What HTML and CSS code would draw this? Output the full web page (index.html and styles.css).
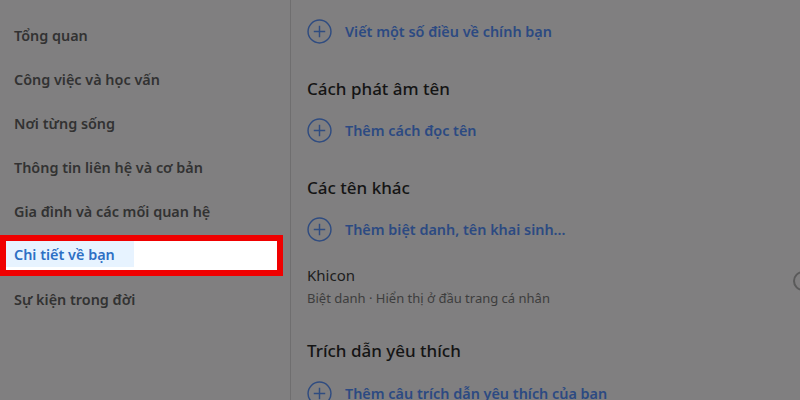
FILE: index.html
```html
<!DOCTYPE html>
<html lang="vi">
<head>
    <meta charset="UTF-8">
    <meta name="viewport" content="width=device-width, initial-scale=1.0">
    <title>Giới thiệu</title>
    <link rel="stylesheet" href="styles.css">
</head>
<body>
    <div class="about">
        <!-- menu bên trái -->
        <ul class="about-nav">
            <li class="nav-item">Tổng quan</li>
            <li class="nav-item">Công việc và học vấn</li>
            <li class="nav-item">Nơi từng sống</li>
            <li class="nav-item">Thông tin liên hệ và cơ bản</li>
            <li class="nav-item">Gia đình và các mối quan hệ</li>
            <li class="nav-item active"><span class="nav-label">Chi tiết về bạn</span></li>
            <li class="nav-item">Sự kiện trong đời</li>
        </ul>

        <!-- nội dung bên phải -->
        <div class="about-content">
            <div class="add-row">
                <svg class="plus" viewBox="0 0 24 24"><circle cx="12" cy="12" r="11"/><path d="M12 6.5v11M6.5 12h11"/></svg>
                <span>Viết một số điều về chính bạn</span>
            </div>

            <div class="section">
                <h3 class="section-title">Cách phát âm tên</h3>
                <div class="add-row">
                    <svg class="plus" viewBox="0 0 24 24"><circle cx="12" cy="12" r="11"/><path d="M12 6.5v11M6.5 12h11"/></svg>
                    <span>Thêm cách đọc tên</span>
                </div>
            </div>

            <div class="section">
                <h3 class="section-title">Các tên khác</h3>
                <div class="add-row">
                    <svg class="plus" viewBox="0 0 24 24"><circle cx="12" cy="12" r="11"/><path d="M12 6.5v11M6.5 12h11"/></svg>
                    <span>Thêm biệt danh, tên khai sinh...</span>
                </div>
                <div class="detail">
                    <div class="detail-text">
                        <div class="detail-name">Khicon</div>
                        <div class="detail-sub">Biệt danh · Hiển thị ở đầu trang cá nhân</div>
                    </div>
                    <span class="more-btn"></span>
                </div>
            </div>

            <div class="section last">
                <h3 class="section-title">Trích dẫn yêu thích</h3>
                <div class="add-row">
                    <svg class="plus" viewBox="0 0 24 24"><circle cx="12" cy="12" r="11"/><path d="M12 6.5v11M6.5 12h11"/></svg>
                    <span>Thêm câu trích dẫn yêu thích của bạn</span>
                </div>
            </div>
        </div>
    </div>
</body>
</html>
```

FILE: styles.css
```css
* {
    margin: 0;
    padding: 0;
    box-sizing: border-box;
}
body {
    background: #807f80;
    font-family: "Noto Sans", "Open Sans", sans-serif;
    overflow: hidden;
    height: 400px;
}
.about {
    display: flex;
    height: 400px;
}

/* menu trái */
.about-nav {
    list-style: none;
    width: 290px;
    flex-shrink: 0;
    padding-top: 13px;
}
.nav-item {
    height: 44px;
    display: flex;
    align-items: center;
    padding-left: 14px;
    font-size: 14.4px;
    font-weight: 600;
    color: #323232;
}
.nav-item.active {
    width: 283px;
    height: 41px;
    margin: 2px 0 1px;
    border: 6px solid #f00000;
    background: #fff;
    align-items: flex-start;
    padding-left: 0;
}
.nav-label {
    display: flex;
    align-items: center;
    width: 128px;
    height: 26px;
    padding-left: 8px;
    background: #e7f3ff;
    color: #2d6fc4;
}

/* nội dung phải */
.about-content {
    flex: 1;
    border-left: 1px solid #6f6e6f;
    padding: 10px 0 0 16px;
}
.add-row {
    height: 42px;
    display: flex;
    align-items: center;
    gap: 13px;
    font-size: 14.4px;
    font-weight: 600;
    color: #2c4a82;
}
.plus {
    width: 25px;
    height: 25px;
    fill: none;
    stroke: #2f4c80;
    stroke-width: 1.4;
}
.section {
    margin-top: 15px;
}
.section.last {
    margin-top: 18px;
}
.section-title {
    height: 42px;
    display: flex;
    align-items: center;
    font-size: 17px;
    font-weight: 500;
    color: #141414;
}
.section.last .section-title {
    height: 44px;
}
.detail {
    display: flex;
    align-items: center;
    justify-content: space-between;
    margin-top: 14px;
    margin-right: -13px;
}
.detail-name {
    font-size: 15px;
    line-height: 22px;
    color: #1c1c1c;
}
.detail-sub {
    font-size: 13px;
    line-height: 24px;
    color: #3d3d3d;
}
.more-btn {
    width: 20px;
    height: 20px;
    border: 2px solid #5a5a5a;
    border-radius: 50%;
    margin-top: -12px;
}
```
